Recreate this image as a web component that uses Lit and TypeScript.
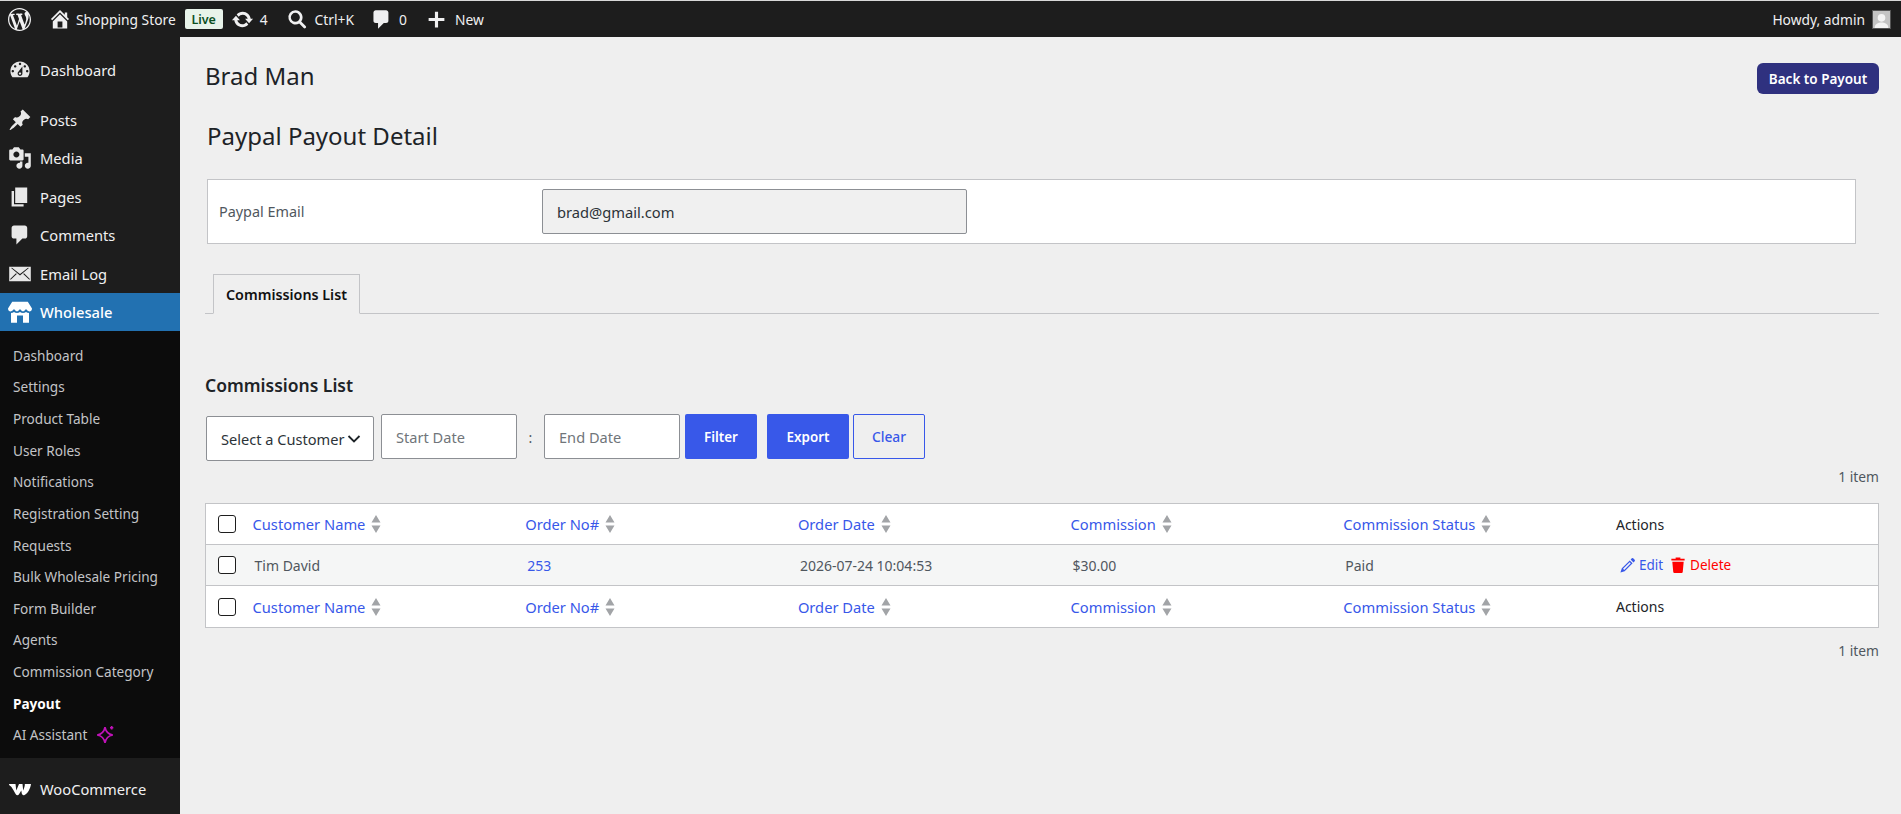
import { LitElement, html, css, svg } from "lit";
import { customElement } from "lit/decorators.js";

const P: Record<string, string> = {
  wp: "M20 10c0-5.52-4.48-10-10-10S0 4.48 0 10s4.48 10 10 10 10-4.48 10-10zM7.78 15.37L4.37 6.22c.55-.02 1.17-.08 1.17-.08.5-.06.44-1.13-.06-1.11 0 0-1.45.11-2.37.11-.18 0-.37 0-.58-.01C4.12 2.69 6.87 1.11 10 1.11c2.33 0 4.45.87 6.05 2.34-.68-.11-1.65.39-1.65 1.58 0 .74.45 1.36.9 2.1.35.61.55 1.36.55 2.46 0 1.49-1.4 5-1.4 5l-3.03-8.37c.54-.02.82-.17.82-.17.5-.05.44-1.25-.06-1.22 0 0-1.44.12-2.38.12-.87 0-2.33-.12-2.33-.12-.5-.03-.56 1.2-.06 1.22l.92.08 1.26 3.41zM17.41 10c.24-.64.74-1.87.43-4.25.7 1.29 1.05 2.71 1.05 4.25 0 3.29-1.73 6.24-4.4 7.78.97-2.59 1.94-5.2 2.92-7.78zM6.1 18.09C3.12 16.65 1.11 13.53 1.11 10c0-1.3.23-2.48.72-3.59C3.25 10.3 4.67 14.2 6.1 18.09zm4.03-6.63l2.58 6.98c-.86.29-1.76.45-2.71.45-.79 0-1.57-.11-2.29-.33.81-2.38 1.62-4.74 2.42-7.1z",
  home: "M16 8.5l1.53 1.53-1.06 1.06L10 4.62l-6.47 6.47-1.06-1.06L10 2.5l4 4v-2h2v4zm-6-2.46l6 5.99V18H4v-5.97zM12 17v-5H8v5h4z",
  update: "M10.2 3.28c3.53 0 6.43 2.61 6.92 6h2.08l-3.5 4-3.5-4h2.32c-.45-1.97-2.21-3.45-4.32-3.45-1.45 0-2.73.71-3.54 1.78L4.95 5.66C6.23 4.2 8.11 3.28 10.2 3.28zm-.4 13.44c-3.52 0-6.43-2.61-6.92-6H.8l3.5-4c1.17 1.33 2.33 2.67 3.5 4H5.48c.45 1.97 2.21 3.45 4.32 3.45 1.45 0 2.73-.71 3.54-1.78l1.71 1.95c-1.28 1.46-3.15 2.38-5.25 2.38z",
  search: "M8.5 2a6.5 6.5 0 0 1 5.3 10.27l4.1 4.1a1.200 1.200 0 0 1 0 1.700l-.1.1a1.200 1.200 0 0 1-1.700 0l-4.100-4.100A6.500 6.500 0 1 1 8.500 2zm0 2.400a4.100 4.100 0 1 0 0 8.200 4.100 4.100 0 0 0 0-8.200z",
  comment: "M5 2h9c1.1 0 2 .9 2 2v7c0 1.1-.9 2-2 2h-2l-5 5v-5H5c-1.1 0-2-.9-2-2V4c0-1.1.9-2 2-2z",
  plus: "M17.500 8.500v3h-6v6h-3v-6h-6v-3h6v-6h3v6z",
  dash: "M3.76 16h12.48c1.1-1.37 1.76-3.11 1.76-5 0-4.42-3.58-8-8-8s-8 3.58-8 8c0 1.89.66 3.63 1.76 5zM10 4c.55 0 1 .45 1 1s-.45 1-1 1-1-.45-1-1 .45-1 1-1zM6 6c.55 0 1 .45 1 1s-.45 1-1 1-1-.45-1-1 .45-1 1-1zm8 0c.55 0 1 .45 1 1s-.45 1-1 1-1-.45-1-1 .45-1 1-1zm-5.37 5.55L12 7v6c0 1.1-.9 2-2 2s-2-.9-2-2c0-.57.24-1.08.63-1.45zM4 10c.55 0 1 .45 1 1s-.45 1-1 1-1-.45-1-1 .45-1 1-1zm12 0c.55 0 1 .45 1 1s-.45 1-1 1-1-.45-1-1 .45-1 1-1zm-5 3c0-.55-.45-1-1-1s-1 .45-1 1 .45 1 1 1 1-.45 1-1z",
  pin: "M10.44 3.02l1.82-1.82 6.36 6.35-1.83 1.82c-1.05-.68-2.48-.57-3.41.36l-.75.75c-.92.93-1.04 2.35-.35 3.41l-1.83 1.82-2.41-2.41-2.8 2.79c-.42.42-3.38 2.71-3.8 2.29s1.86-3.39 2.28-3.81l2.79-2.79L4.1 9.36l1.83-1.82c1.05.69 2.48.57 3.4-.36l.75-.75c.93-.92 1.05-2.35.36-3.41z",
  media: "M13 11V4c0-.55-.45-1-1-1h-1.67L9 1H5L3.67 3H2c-.55 0-1 .45-1 1v7c0 .55.45 1 1 1h10c.55 0 1-.45 1-1zM7 4.5c1.38 0 2.5 1.12 2.5 2.5S8.38 9.5 7 9.5 4.5 8.38 4.5 7 5.62 4.5 7 4.5zM14 6h5v10.5c0 1.38-1.12 2.5-2.5 2.5S14 17.88 14 16.5s1.12-2.5 2.5-2.5c.17 0 .34.02.5.05V9h-3V6zm-4 8.05V13h2v3.5c0 1.38-1.12 2.5-2.5 2.5S7 17.88 7 16.5 8.12 14 9.5 14c.17 0 .34.02.5.05z",
  pages: "M6 15V2h10v13H6zm-1 1h8v2H3V5h2v11z",
  mail: "M1 4h18v12H1zM2.600 5 10 11.200 17.400 5l-.7-.3L10 9.900 3.300 4.700zM2 15l5.300-5-.6-.6L2 14zm16 0v-1l-4.700-4.600-.6.6z",
  store: "M3.500 1.500h13L20 7c0 1.500-1 2.500-2.200 2.500S15.600 8.500 15 7.600c-.6.9-1.500 1.900-2.500 1.900S10.600 8.500 10 7.600C9.400 8.500 8.500 9.500 7.500 9.500S5.600 8.500 5 7.600C4.400 8.500 3.400 9.500 2.200 9.500S0 8.500 0 7zM2.500 10.800c.9 0 1.800-.3 2.500-.9.700.6 1.600.9 2.500.9s1.800-.3 2.500-.9c.7.6 1.600.9 2.500.9s1.800-.3 2.500-.9c.7.6 1.600.9 2.500.9V19h-5v-6H7.500v6h-5z",
  pencil: "M13.600 1.400a1 1 0 0 1 1.400 0l1.600 1.600a1 1 0 0 1 0 1.400l-1.300 1.300-3-3zM11.400 3.600l3 3L6 15l-4.500 1.500L3 12zM11.300 5.500 4.300 12.500l1.200 1.200 7-7z",
  trash: "M6.500 3V1.500h5V3h4.500v1.800H2V3zM3 6h12l-1 11a1.200 1.200 0 0 1-1.200 1H5.200A1.200 1.200 0 0 1 4 17z",
  woo: "M1 5h6.500l.8 6.500L11 5h3.500l.7 6.500C16.500 8.500 17 6 16.800 5H23c-.5 4-3 9.500-6.500 11-1.500.6-2.500-.3-2.800-2l-.4-2.500-2.300 3.800c-.8 1.200-2.500 1.200-3.400-.3C6.300 12.500 4 8.500 3 7.500 2.200 6.800 1 6.500 1 5z",
  spark: "M9 2c.8 4.200 2.800 6.200 7 7-4.200.8-6.200 2.800-7 7-.8-4.200-2.800-6.200-7-7 4.200-.8 6.200-2.800 7-7z",
};

const ico = (n: string, cls = "", vb = "0 0 20 20") =>
  html`<svg class="ico ${cls}" viewBox=${vb} aria-hidden="true">${svg`<path fill-rule="evenodd" d=${P[n]}></path>`}</svg>`;

const sortIco = html`<svg class="sort" viewBox="0 0 10 18" aria-hidden="true"><path d="M5 0l4.500 7.500h-9zM5 18 .5 10.500h9z"></path></svg>`;

@customElement("app-root")
export class AppRoot extends LitElement {
  static styles = css`
    :host { display: block; height: 814px; overflow: hidden; background: #efefef; font-family: "Noto Sans", "Open Sans", sans-serif; font-size: 14px; color: #1d2327; }
    * { box-sizing: border-box; }
    .ico { fill: currentColor; display: block; flex: none; }

    .bar { height: 37px; background: #1d1d1d; border-top: 1px solid #d8d8d8; display: flex; align-items: center; color: #f0f0f1; font-size: 13.800px; padding-left: 8px; padding-right: 10px; }
    .bar .wp { width: 23px; height: 23px; margin-right: 17px; }
    .bar .home { width: 24px; height: 24px; margin-right: 4px; }
    .badge { background: #e8f3ea; color: #0c4f1f; font-size: 12.500px; font-weight: 600; border-radius: 2px; height: 20px; width: 38px; margin: 0 8px 0 9px; display: flex; align-items: center; justify-content: center; }
    .bar .upd { width: 23px; height: 23px; margin-right: 6px; }
    .bar .srch { width: 22px; height: 22px; margin: 0 7px 0 18px; }
    .bar .cmt { width: 23px; height: 23px; margin: 0 6px 0 16px; }
    .bar .pl { width: 21px; height: 21px; margin: 0 8px 0 19px; }
    .sp { flex: 1; }
    .avatar { width: 19px; height: 19px; margin-left: 7px; background: #c4c4c4; border: 1px solid #555; }
    .avatar svg { display: block; width: 100%; height: 100%; fill: #f4f4f4; }

    .body { display: flex; height: 777px; }
    .side { width: 180px; flex: none; background: #1d1d1d; color: #f0f0f1; font-size: 14.700px; padding-top: 14px; display: flex; flex-direction: column; }
    .m { height: 38.400px; flex: none; display: flex; align-items: center; padding-left: 8px; gap: 8px; }
    .m .ico { width: 24px; height: 24px; color: #e8e8e8; }
    .m.dash { margin-bottom: 11.500px; }
    .m.act { background: #2271b1; color: #fff; font-weight: 500; }
    .m.act .ico { width: 24px; height: 24px; color: #fff; }
    .sub { background: #0c0c0c; padding: 8px 0 6px; color: #c3c4c7; font-size: 13.600px; height: 427px; flex: none; }
    .sub div { height: 31.670px; display: flex; align-items: center; padding-left: 13px; gap: 8px; }
    .sub .on { color: #fff; font-weight: 700; }
    .spark { width: 20px; height: 20px; fill: none; stroke: #c012b8; stroke-width: 1.500; }
    .m.woo { margin-top: 12px; }
    .m.woo .ico { color: #fff; }

    .main { flex: 1; min-width: 0; padding: 0 22px 0 25px; }
    .top { display: flex; justify-content: space-between; align-items: flex-start; padding-top: 26px; }
    h1 { font-size: 24px; font-weight: 400; margin: 0; line-height: 26px; }
    .back { width: 122px; height: 31px; border-radius: 6px; background: #2f317f; color: #fff; font-size: 13.500px; font-weight: 600; display: flex; align-items: center; justify-content: center; }
    h2 { font-size: 24px; font-weight: 400; margin: 26px 0 0 2px; line-height: 32px; }
    .card { margin: 27px 0 0 2px; width: 1649px; height: 65px; background: #fff; border: 1px solid #c3c4c7; display: flex; align-items: center; padding-left: 11px; }
    .card label { width: 323px; color: #50575e; font-size: 14.400px; }
    .email { width: 425px; height: 45px; background: #f0f0f0; border: 1px solid #8c8f94; border-radius: 2px; display: flex; align-items: center; padding-left: 14px; font-size: 14.700px; color: #2c3338; }
    .tabs { margin-top: 30px; height: 40px; border-bottom: 1px solid #c3c4c7; padding-left: 8px; }
    .tab { width: 147px; height: 40px; border: 1px solid #c3c4c7; border-bottom: 1px solid #efefef; display: flex; align-items: center; justify-content: center; font-size: 14.300px; font-weight: 600; color: #111; }
    h3 { font-size: 17.500px; font-weight: 600; margin: 57px 0 0; line-height: 28px; }
    .filters { display: flex; align-items: flex-start; margin-top: 15px; height: 46px; }
    .select { width: 168px; height: 45px; margin: 2px 0 0 1px; background: #fff; border: 1px solid #8c8f94; border-radius: 2px; display: flex; align-items: center; padding-left: 14px; font-size: 14.600px; color: #2c3338; white-space: nowrap; gap: 2px; }
    .select svg { width: 14px; height: 10px; fill: none; stroke: #1d2327; stroke-width: 1.800; flex: none; }
    .date { width: 136px; height: 45px; background: #fff; border: 1px solid #8c8f94; border-radius: 2px; display: flex; align-items: center; padding-left: 14px; color: #70757a; font-size: 14.600px; margin-left: 7px; }
    .colon { width: 27px; text-align: center; line-height: 48px; color: #50575e; }
    .date.end { margin-left: 0; }
    .btn { height: 45px; border-radius: 2px; display: flex; align-items: center; justify-content: center; font-size: 13.400px; font-weight: 600; background: #3858e9; color: #fff; }
    .f { width: 72px; margin-left: 5px; }
    .x { width: 82px; margin-left: 10px; }
    .c { width: 72px; margin-left: 4px; background: transparent; border: 1px solid #3858e9; color: #3858e9; font-weight: 500; font-size: 13.800px; }
    .count { text-align: right; color: #50575e; font-size: 13.800px; height: 20px; line-height: 20px; }
    .c1 { margin-top: 7px; }
    .c2 { margin-top: 13px; }
    .table { margin-top: 16px; border: 1px solid #c3c4c7; background: #fff; }
    .row { display: grid; grid-template-columns: 46.500px repeat(5, 272.700px) 1fr; align-items: center; height: 40px; font-size: 14px; }
    .row:last-child { height: 41px; }
    .row.b { background: #f5f6f6; border-top: 1px solid #c3c4c7; border-bottom: 1px solid #c3c4c7; height: 42px; color: #50575e; }
    .cb { width: 18px; height: 18px; margin-left: 12px; border: 1.500px solid #1e1e1e; border-radius: 3px; background: #fff; }
    .th { display: flex; align-items: center; gap: 6px; color: #3858e9; font-size: 14.700px; }
    .th.plain { color: #1d2327; font-size: 14px; }
    .sort { width: 10px; height: 18px; fill: #a2a4a7; flex: none; }
    .td { padding-left: 2px; }
    .lnk { color: #3858e9; }
    .acts { display: flex; align-items: center; padding-left: 3px; font-size: 13.500px; }
    .acts .e { width: 17px; height: 17px; color: #3858e9; margin-right: 3px; }
    .acts .d { width: 18px; height: 18px; color: #ff0000; margin: 0 3px 0 6px; }
    .acts .del { color: #ff0000; }
  `;

  private head() {
    const cols = ["Customer Name", "Order No#", "Order Date", "Commission", "Commission Status"];
    return html`<div class="row"><div class="cb"></div>
      ${cols.map((c) => html`<div class="th">${c}${sortIco}</div>`)}
      <div class="th plain">Actions</div></div>`;
  }

  render() {
    const sub = ["Dashboard", "Settings", "Product Table", "User Roles", "Notifications", "Registration Setting", "Requests", "Bulk Wholesale Pricing", "Form Builder", "Agents", "Commission Category"];
    return html`
      <div class="bar">
        ${ico("wp", "wp")}${ico("home", "home")}<span>Shopping Store</span><span class="badge">Live</span>
        ${ico("update", "upd")}<span>4</span>
        ${ico("search", "srch")}<span>Ctrl+K</span>
        ${ico("comment", "cmt")}<span>0</span>
        ${ico("plus", "pl")}<span>New</span>
        <span class="sp"></span>
        <span>Howdy, admin</span>
        <span class="avatar"><svg viewBox="0 0 20 20"><circle cx="10" cy="8" r="4.500"></circle><path d="M2 20c0-5 4-6.500 8-6.500s8 1.500 8 6.500z"></path></svg></span>
      </div>
      <div class="body">
        <nav class="side">
          <div class="m dash">${ico("dash")}Dashboard</div>
          <div class="m">${ico("pin")}Posts</div>
          <div class="m">${ico("media")}Media</div>
          <div class="m">${ico("pages")}Pages</div>
          <div class="m">${ico("comment")}Comments</div>
          <div class="m">${ico("mail")}Email Log</div>
          <div class="m act">${ico("store")}Wholesale</div>
          <div class="sub">
            ${sub.map((s) => html`<div>${s}</div>`)}
            <div class="on">Payout</div>
            <div>AI Assistant<svg class="spark" viewBox="0 0 18 18"><path d=${P.spark}></path><path d="M15 1v3M13.500 2.500h3"></path></svg></div>
          </div>
          <div class="m woo">${ico("woo", "", "0 0 24 20")}WooCommerce</div>
        </nav>
        <main class="main">
          <div class="top"><h1>Brad Man</h1><div class="back">Back to Payout</div></div>
          <h2>Paypal Payout Detail</h2>
          <div class="card"><label>Paypal Email</label><div class="email">brad@gmail.com</div></div>
          <div class="tabs"><div class="tab">Commissions List</div></div>
          <h3>Commissions List</h3>
          <div class="filters">
            <div class="select">Select a Customer<svg viewBox="0 0 14 10"><path d="M1.500 2l5.500 5.500L12.500 2"></path></svg></div>
            <div class="date">Start Date</div>
            <div class="colon">:</div>
            <div class="date end">End Date</div>
            <div class="btn f">Filter</div>
            <div class="btn x">Export</div>
            <div class="btn c">Clear</div>
          </div>
          <div class="count c1">1 item</div>
          <div class="table">
            ${this.head()}
            <div class="row b">
              <div class="cb"></div>
              <div class="td">Tim David</div>
              <div class="td lnk">253</div>
              <div class="td">2026-07-24 10:04:53</div>
              <div class="td">$30.00</div>
              <div class="td">Paid</div>
              <div class="acts">${ico("pencil", "e", "0 0 18 18")}<span class="lnk">Edit</span>${ico("trash", "d", "0 0 18 19")}<span class="del">Delete</span></div>
            </div>
            ${this.head()}
          </div>
          <div class="count c2">1 item</div>
        </main>
      </div>
    `;
  }
}
